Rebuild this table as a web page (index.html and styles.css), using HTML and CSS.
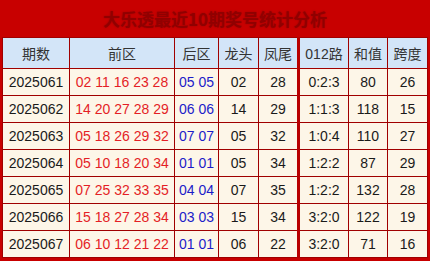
FILE: index.html
```html
<!DOCTYPE html>
<html lang="zh">
<head>
<meta charset="utf-8">
<link rel="stylesheet" href="styles.css">
</head>
<body>
<div class="panel">
  <div class="title">大乐透最近10期奖号统计分析</div>
  <table class="stats">
    <colgroup>
      <col class="c-issue"><col class="c-front"><col class="c-back"><col class="c-head"><col class="c-tail"><col class="c-road"><col class="c-sum"><col class="c-span">
    </colgroup>
    <thead>
      <tr><th>期数</th><th>前区</th><th>后区</th><th>龙头</th><th class="split">凤尾</th><th>012路</th><th>和值</th><th>跨度</th></tr>
    </thead>
    <tbody>
      <tr><td>2025061</td><td class="red">02 11 16 23 28</td><td class="blue">05 05</td><td>02</td><td class="split">28</td><td>0:2:3</td><td>80</td><td>26</td></tr>
      <tr><td>2025062</td><td class="red">14 20 27 28 29</td><td class="blue">06 06</td><td>14</td><td class="split">29</td><td>1:1:3</td><td>118</td><td>15</td></tr>
      <tr><td>2025063</td><td class="red">05 18 26 29 32</td><td class="blue">07 07</td><td>05</td><td class="split">32</td><td>1:0:4</td><td>110</td><td>27</td></tr>
      <tr><td>2025064</td><td class="red">05 10 18 20 34</td><td class="blue">01 01</td><td>05</td><td class="split">34</td><td>1:2:2</td><td>87</td><td>29</td></tr>
      <tr><td>2025065</td><td class="red">07 25 32 33 35</td><td class="blue">04 04</td><td>07</td><td class="split">35</td><td>1:2:2</td><td>132</td><td>28</td></tr>
      <tr><td>2025066</td><td class="red">15 18 27 28 34</td><td class="blue">03 03</td><td>15</td><td class="split">34</td><td>3:2:0</td><td>122</td><td>19</td></tr>
      <tr><td>2025067</td><td class="red">06 10 12 21 22</td><td class="blue">01 01</td><td>06</td><td class="split">22</td><td>3:2:0</td><td>71</td><td>16</td></tr>
    </tbody>
  </table>
</div>
</body>
</html>
```
FILE: styles.css
```css
html, body {
  margin: 0;
  padding: 0;
  background: #ffffff;
}
.panel {
  width: 430px;
  box-sizing: border-box;
  background: #c80000;
  padding: 0 2px 3px;
}
.title {
  height: 37px;
  line-height: 38px;
  text-align: center;
  font-family: "Noto Sans CJK SC", "Liberation Sans", sans-serif;
  font-size: 17px;
  font-weight: bold;
  color: #900000;
  text-shadow: 0 0 2px #a00000;
}
.stats {
  width: 426px;
  table-layout: fixed;
  border-collapse: collapse;
  font-family: "Liberation Sans", "Noto Sans CJK SC", sans-serif;
  font-size: 14px;
}
.c-issue { width: 67px; }
.c-front { width: 105px; }
.c-back { width: 44px; }
.c-head { width: 40px; }
.c-tail { width: 40px; }
.c-road { width: 50px; }
.c-sum { width: 39px; }
.c-span { width: 40px; }
.stats th, .stats td {
  border: 1px solid #a00000;
  padding: 0;
  text-align: center;
  white-space: nowrap;
}
.stats th {
  height: 30px;
  background: #d3e5f8;
  color: #333333;
  font-weight: normal;
  font-family: "Noto Sans CJK SC", "Liberation Sans", sans-serif;
  font-size: 14px;
}
.stats th:nth-child(6) {
  font-family: "Liberation Sans", "Noto Sans CJK SC", sans-serif;
}
.stats td {
  height: 26px;
  background: #fdf6e8;
  color: #1a1a1a;
}
.stats .split {
  border-right: 3px solid #b80000;
}
.stats .red { color: #e41e26; }
.stats .blue { color: #1c1cc8; }
```
